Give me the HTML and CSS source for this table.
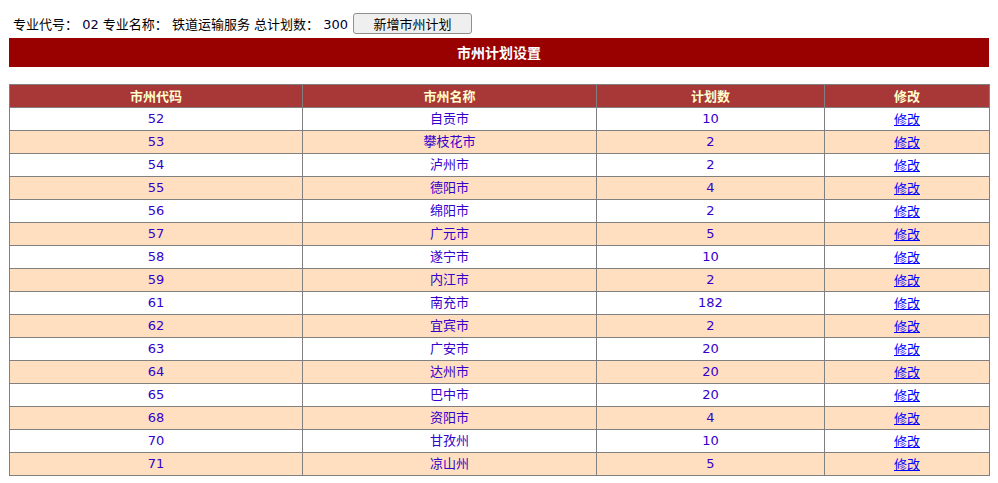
FILE: index.html
```html
<!DOCTYPE html>
<html>
<head>
<meta charset="utf-8">
<link rel="stylesheet" href="styles.css">
</head>
<body>
<div class="page">
  <div class="info">
    <span>专业代号： <span class="num">02</span> 专业名称： 铁道运输服务 总计划数： <span class="num">300</span></span>
    <button class="add">新增市州计划</button>
  </div>
  <div class="title">市州计划设置</div>
  <table class="grid">
    <colgroup>
      <col class="c1"><col class="c2"><col class="c3"><col class="c4">
    </colgroup>
    <thead>
      <tr><th>市州代码</th><th>市州名称</th><th>计划数</th><th>修改</th></tr>
    </thead>
    <tbody>
      <tr><td>52</td><td>自贡市</td><td>10</td><td><a href="#">修改</a></td></tr>
      <tr class="alt"><td>53</td><td>攀枝花市</td><td>2</td><td><a href="#">修改</a></td></tr>
      <tr><td>54</td><td>泸州市</td><td>2</td><td><a href="#">修改</a></td></tr>
      <tr class="alt"><td>55</td><td>德阳市</td><td>4</td><td><a href="#">修改</a></td></tr>
      <tr><td>56</td><td>绵阳市</td><td>2</td><td><a href="#">修改</a></td></tr>
      <tr class="alt"><td>57</td><td>广元市</td><td>5</td><td><a href="#">修改</a></td></tr>
      <tr><td>58</td><td>遂宁市</td><td>10</td><td><a href="#">修改</a></td></tr>
      <tr class="alt"><td>59</td><td>内江市</td><td>2</td><td><a href="#">修改</a></td></tr>
      <tr><td>61</td><td>南充市</td><td>182</td><td><a href="#">修改</a></td></tr>
      <tr class="alt"><td>62</td><td>宜宾市</td><td>2</td><td><a href="#">修改</a></td></tr>
      <tr><td>63</td><td>广安市</td><td>20</td><td><a href="#">修改</a></td></tr>
      <tr class="alt"><td>64</td><td>达州市</td><td>20</td><td><a href="#">修改</a></td></tr>
      <tr><td>65</td><td>巴中市</td><td>20</td><td><a href="#">修改</a></td></tr>
      <tr class="alt"><td>68</td><td>资阳市</td><td>4</td><td><a href="#">修改</a></td></tr>
      <tr><td>70</td><td>甘孜州</td><td>10</td><td><a href="#">修改</a></td></tr>
      <tr class="alt"><td>71</td><td>凉山州</td><td>5</td><td><a href="#">修改</a></td></tr>
    </tbody>
  </table>
</div>
</body>
</html>
```
FILE: styles.css
```css
html, body {
  margin: 0;
  padding: 0;
  background: #ffffff;
}
body {
  font-family: "DejaVu Sans", Verdana, "Noto Sans CJK SC", sans-serif;
  font-size: 13px;
  color: #000000;
}
.page {
  padding: 13px 9px 0 9px;
  width: 980px;
}
.info {
  display: flex;
  align-items: center;
  gap: 5px;
  height: 21px;
  padding-left: 4px;
}
.num {
  color: #000033;
}
.add {
  width: 119px;
  height: 21px;
  padding: 0;
  font-family: "Noto Sans CJK SC", sans-serif;
  font-size: 13px;
  color: #000;
  background: #efefef;
  border: 1px solid #8f8f8f;
  border-radius: 3px;
}
.title {
  margin-top: 4px;
  height: 29px;
  line-height: 29px;
  background: #990000;
  color: #ffffff;
  text-align: center;
  font-weight: bold;
  font-size: 14px;
  font-family: "Noto Sans CJK SC", sans-serif;
}
.grid {
  margin-top: 17px;
  width: 980px;
  border-collapse: collapse;
  table-layout: fixed;
}
.c1 { width: 293px; }
.c2 { width: 294px; }
.c3 { width: 228px; }
.c4 { width: 165px; }
.grid th, .grid td {
  border: 1px solid #808080;
  height: 22px;
  padding: 0;
  text-align: center;
  vertical-align: middle;
  line-height: 16px;
}
.grid th {
  background: #a83838;
  color: #ffffcc;
  font-weight: bold;
  font-size: 13px;
  font-family: "Noto Sans CJK SC", sans-serif;
}
.grid td {
  color: #3300cc;
  font-size: 13px;
}
.grid tr.alt td {
  background: #ffdfc0;
}
.grid a {
  color: #0000ff;
  text-decoration: underline;
  font-size: 13px;
  font-family: "Noto Sans CJK SC", sans-serif;
}
```
